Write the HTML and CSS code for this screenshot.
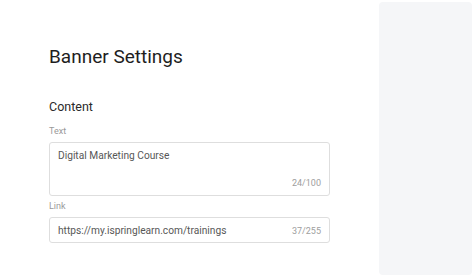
FILE: index.html
```html
<!DOCTYPE html>
<html>
  <head>
    <title>Banner Settings</title>
    <link rel="stylesheet" href="styles.css">
  </head>
  <body>
    <div class="page">
      <div class="settings">
        <h1 class="title">Banner Settings</h1>
        <h2 class="section">Content</h2>

        <div class="label">Text</div>
        <div class="field field-area">
          <div class="value">Digital Marketing Course</div>
          <div class="counter">24/100</div>
        </div>

        <div class="label label-link">Link</div>
        <div class="field field-line">
          <div class="value">https://my.ispringlearn.com/trainings</div>
          <div class="counter">37/255</div>
        </div>
      </div>
      <div class="preview"></div>
    </div>
  </body>
</html>
```

FILE: styles.css
```css
body{
  margin: 0;
  background-color: white;
  font-family: Roboto, "Liberation Sans", sans-serif;
}
.page{
  display: flex;
  height: 277px;
}
.settings{
  width: 330px;
  padding-left: 49px;
  padding-top: 45px;
  box-sizing: border-box;
}
.title{
  margin: 0;
  font-size: 19px;
  line-height: 24px;
  font-weight: 400;
  color: #1e1e1e;
}
.section{
  margin: 29px 0 0 0;
  font-size: 12.5px;
  line-height: 18px;
  font-weight: 400;
  color: #2a2a2a;
}
.label{
  margin-top: 8px;
  font-size: 9px;
  line-height: 14px;
  color: #9a9a9a;
}
.label-link{
  margin-top: 3px;
}
.field{
  margin-top: 4px;
  width: 281px;
  box-sizing: border-box;
  border: 1px solid #dedede;
  border-radius: 3px;
  background-color: white;
  padding: 0 8px;
}
.field-area{
  height: 54px;
  display: flex;
  flex-direction: column;
  justify-content: space-between;
  padding-top: 4.5px;
  padding-bottom: 5px;
}
.field-area .counter{
  align-self: flex-end;
}
.field-line{
  height: 26px;
  display: flex;
  align-items: center;
  justify-content: space-between;
  padding-top: 1px;
}
.value{
  font-size: 10.2px;
  line-height: 16px;
  color: #575757;
}
.counter{
  font-size: 9px;
  line-height: 14px;
  color: #9e9e9e;
}
.preview{
  margin: 2px 2px 2px 49px;
  flex: 1;
  background-color: #f5f6f8;
  border-radius: 4px;
}
```
